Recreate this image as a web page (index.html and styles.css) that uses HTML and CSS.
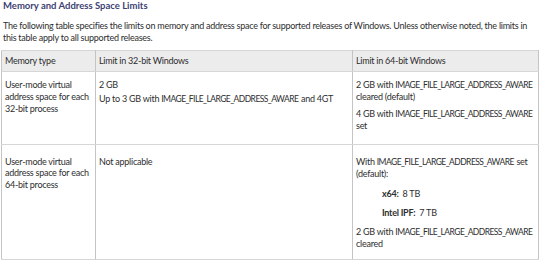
FILE: index.html
```html
<!DOCTYPE html>
<html lang="en">
<head>
<meta charset="utf-8">
<title>Memory and Address Space Limits</title>
<link rel="stylesheet" href="styles.css">
</head>
<body>
<h4 class="title">Memory and Address Space Limits</h4>
<p class="intro">The following table specifies the limits on memory and address space for supported releases of Windows. Unless otherwise noted, the limits in this table apply to all supported releases.</p>
<table class="limits">
  <colgroup>
    <col class="c1"><col class="c2"><col class="c3">
  </colgroup>
  <thead>
    <tr><th>Memory type</th><th>Limit in 32-bit Windows</th><th>Limit in 64-bit Windows</th></tr>
  </thead>
  <tbody>
    <tr class="r1">
      <td><p>User-mode virtual address space for each 32-bit process</p></td>
      <td><p class="tight">2 GB</p><p>Up to 3 GB with <span class="flag">IMAGE_FILE_LARGE_ADDRESS_AWARE</span> and 4GT</p></td>
      <td><p>2 GB with <span class="flag">IMAGE_FILE_LARGE_ADDRESS_AWARE</span> cleared (default)</p><p>4 GB with <span class="flag">IMAGE_FILE_LARGE_ADDRESS_AWARE</span> set</p></td>
    </tr>
    <tr class="r2">
      <td><p>User-mode virtual address space for each 64-bit process</p></td>
      <td><p>Not applicable</p></td>
      <td>
        <p>With <span class="flag">IMAGE_FILE_LARGE_ADDRESS_AWARE</span> set (default):</p>
        <p class="indent"><b>x64:</b>&nbsp; 8 TB</p>
        <p class="indent"><b>Intel IPF:</b>&nbsp; 7 TB</p>
        <p>2 GB with <span class="flag">IMAGE_FILE_LARGE_ADDRESS_AWARE</span> cleared</p>
      </td>
    </tr>
  </tbody>
</table>
</body>
</html>
```
FILE: styles.css
```css
html, body {
  margin: 0;
  padding: 0;
  background: #ffffff;
}

body {
  font-family: Lato, "Open Sans", sans-serif;
  font-size: 9px;
  letter-spacing: -0.25px;
  color: #2e2e2e;
}

.title {
  margin: 0 0 8px 3px;
  font-size: 9.5px;
  line-height: 12px;
  font-weight: bold;
  letter-spacing: 0;
  color: #3d3f74;
}

.intro {
  margin: 0 0 6px 3px;
  line-height: 12px;
  width: 532px;
}

.flag {
  font-size: 8.5px;
  letter-spacing: -0.55px;
  margin-right: 0.6px;
}

.limits {
  margin-left: 1px;
  width: 537px;
  border-collapse: collapse;
  table-layout: fixed;
}

.c1 { width: 94px; }
.c2 { width: 257px; }
.c3 { width: 186px; }

.limits th,
.limits td {
  border: 1px solid #d6d6d6;
  border-left-color: #c4c4c4;
  border-right-color: #c4c4c4;
  text-align: left;
  vertical-align: top;
}

.limits th {
  background: #ececec;
  font-weight: normal;
  line-height: 12px;
  padding: 4px 3px 4px 3px;
}

.limits td p {
  margin: 0;
}

.r1 td {
  line-height: 12px;
  padding: 7px 3px 12px 3px;
}

.r1 td p + p {
  margin-top: 5px;
}

.r1 td p.tight + p {
  margin-top: 2px;
}

.r2 td {
  line-height: 11.3px;
  padding: 11px 3px 9px 3px;
}

.r2 td p + p {
  margin-top: 8px;
}

.indent {
  padding-left: 26px;
}

.indent b {
  font-weight: bold;
}
```
